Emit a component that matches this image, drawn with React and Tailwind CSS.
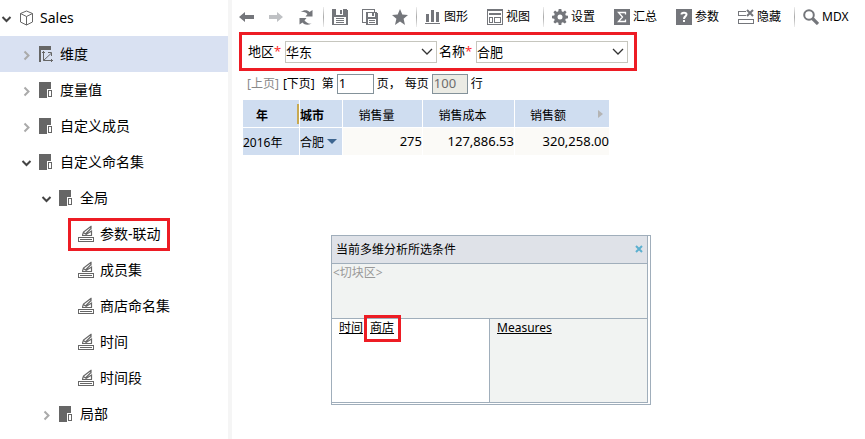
import React from "react";

function Svg({ children, className = "", box = "0 0 16 16" }) {
  return (
    <svg viewBox={box} className={"block h-4 w-4 shrink-0 " + className} fill="none" aria-hidden="true">
      {children}
    </svg>
  );
}

const BoxIcon = () => (
  <Svg>
    <path d="M7.5 1 1.5 3.500v8.500l6 3 6-3V3.500zM1.500 3.500l6 3 6-3M7.500 6.500V15" stroke="#666" />
  </Svg>
);

const DimensionIcon = () => (
  <Svg>
    <path d="M0 0h12v4H2v12H0z" fill="#666" shapeRendering="crispEdges" />
    <path d="M4.5 5v9.5H14M3 7l1.500-1.500L6 7M12.500 13v3M4.500 14.500l7.500-7M9 6.500h3.500V10" stroke="#666" />
  </Svg>
);

const LevelIcon = () => (
  <Svg>
    <g shapeRendering="crispEdges">
      <path d="M0 0h12v7H8v9H0z" fill="#666" />
      <path d="M9.500 8.500h3v6h-3z" stroke="#666" />
    </g>
  </Svg>
);

const SetIcon = () => (
  <Svg className="overflow-visible">
    <g transform="translate(-1 0)">
      <path d="M0.500 11.500h15v4h-15z" stroke="#666" shapeRendering="crispEdges" />
      <path d="M2 13h12v1H2z" fill="#666" shapeRendering="crispEdges" />
      <path d="M4 9h10v1H4z" fill="#666" shapeRendering="crispEdges" />
      <path d="m4.500 9 1-3 6-4.500L13.500 0M5.500 6.500 7.500 8l5.500-5.500M8 8.500 13.500 5v4.500M13 .5v3" stroke="#666" strokeWidth="1.200" />
    </g>
  </Svg>
);

const TREE = [
  { label: "Sales", level: 0, open: true, icon: BoxIcon },
  { label: "维度", level: 1, open: false, icon: DimensionIcon, selected: true },
  { label: "度量值", level: 1, open: false, icon: LevelIcon },
  { label: "自定义成员", level: 1, open: false, icon: LevelIcon },
  { label: "自定义命名集", level: 1, open: true, icon: LevelIcon },
  { label: "全局", level: 2, open: true, icon: LevelIcon },
  { label: "参数-联动", level: 3, icon: SetIcon, marked: true },
  { label: "成员集", level: 3, icon: SetIcon },
  { label: "商店命名集", level: 3, icon: SetIcon },
  { label: "时间", level: 3, icon: SetIcon },
  { label: "时间段", level: 3, icon: SetIcon },
  { label: "局部", level: 2, open: false, icon: LevelIcon },
];

const INDENT = ["pl-0", "pl-5", "pl-10", "pl-15"];

function TreeRow({ label, level, open, icon: Icon, selected, marked }) {
  return (
    <li className={"flex h-9 items-center " + INDENT[level] + (selected ? " bg-[#d9e1f2]" : "")}>
      <span className="flex w-[19px] shrink-0">
        {open !== undefined && (
          <button type="button" aria-label={label} aria-expanded={open} className="block pt-1">
            <Svg className="-ml-px">
              {open ? (
                <path d="m3.500 5 4 4 4-4" stroke="#444" strokeWidth="2" />
              ) : (
                <path d="m5.500 3.500 4 4-4 4" stroke="#aaa" strokeWidth="2" />
              )}
            </Svg>
          </button>
        )}
      </span>
      <a href="#" className="relative flex items-center gap-[5px] text-sm whitespace-nowrap text-black">
        <Icon />
        {label}
        {marked && (
          <span className="pointer-events-none absolute -top-1.5 -right-[9px] -bottom-[7px] -left-[11px] border-3 border-[#ed1c24]" />
        )}
      </a>
    </li>
  );
}

const G = "#74767b";

const icons = {
  back: <path d="M0 8 6 3v3h9v4H6v3z" fill={G} />,
  forward: <path d="M14 8 8 3v3H0v4h8v3z" fill="#bfc1c4" />,
  refresh: (
    <g fill={G}>
      <path d="M1.500 3C5 .5 8.500.5 10.500 3L13.500 1v6.500H6.500L8.500 5C6.500 3 4 2.500 1.500 3z" />
      <path d="M12.500 14.500C9 16.500 5.500 16 3.500 13.500L.5 15.500V9h7l-2 2.500c2 2.500 4.500 3.500 7 3z" />
    </g>
  ),
  save: (
    <g shapeRendering="crispEdges">
      <path d="M0 0h14l2 2v14H0z" fill={G} />
      <path d="M4 0h7v6H4zM2 8h12v7H2z" fill="#fff" />
      <path d="M8 1h2v4H8zM4 9h8v1H4zM4 11h8v1H4zM4 13h8v1H4z" fill={G} />
    </g>
  ),
  saveAs: (
    <g shapeRendering="crispEdges">
      <path d="M3.500 13.500h-3V.500h12v2" stroke={G} />
      <path d="M4 3h10l2 2v11H4z" fill={G} />
      <path d="M6 4h7v4H6zM6 10h8v5H6z" fill="#fff" />
      <path d="M10 4h2v3h-2zM7 11h6v1H7zM7 13h6v1H7z" fill={G} />
    </g>
  ),
  star: <path d="m8 0 2.300 5.500 5.700.500-4.400 3.800L13 16l-5-3.400L3 16l1.400-6.200L0 6l5.700-.5z" fill={G} />,
  chart: (
    <path d="M1 5h3v8H1zM6 1h3v12H6zM11 3h3v10h-3zM0 14h15v1H0z" fill={G} shapeRendering="crispEdges" />
  ),
  view: (
    <g shapeRendering="crispEdges">
      <path d="M.5 .5h15v15H.5z" stroke={G} />
      <path d="M1 1h14v1H1zM2 4h12v2H2z" fill={G} />
      <path d="M2.500 8.500h3v5h-3zM7.500 8.500h6v5h-6z" stroke={G} />
    </g>
  ),
  gear: (
    <g>
      <path
        d="M6.700 0h2.600l.4 2.300 1.300.6L13 1.500 14.600 3.200 13.200 5l.6 1.400 2.200.4v2.500l-2.200.4-.6 1.400 1.300 1.800-1.700 1.700-1.900-1.300-1.300.5L9.300 16H6.700l-.4-2.200-1.300-.5-1.900 1.300-1.700-1.700 1.300-1.800-.5-1.400L0 9.300V6.800l2.200-.4L2.800 5 1.400 3.200 3.100 1.500 5 2.900l1.300-.6z"
        fill={G}
      />
      <circle cx="8" cy="8" r="2.500" fill="#fff" />
    </g>
  ),
  sum: (
    <g>
      <path d="M0 0h16v16H0z" fill={G} />
      <path d="M11.500 5.500v-2h-7L8.500 8l-4 4.500h7v-2" stroke="#fff" strokeWidth="1.300" />
    </g>
  ),
  param: (
    <g>
      <path d="M0 0h16v16H0z" fill={G} />
      <path d="M5.500 5.500C5.500 3 10.500 3 10.500 5.500 10.500 7.500 8 7.300 8 10" stroke="#fff" strokeWidth="2" />
      <path d="M7 11h2v2H7z" fill="#fff" />
    </g>
  ),
  hide: (
    <g>
      <path d="M8 2.500H.5v4H8M.5 10.500h15v4H.5z" stroke={G} shapeRendering="crispEdges" />
      <path d="m9 1 6 6M15 1 9 7" stroke={G} strokeWidth="2" />
    </g>
  ),
  search: (
    <g stroke={G}>
      <circle cx="6" cy="6" r="4.800" strokeWidth="2" />
      <path d="m9.500 9.500 5.500 5.500" strokeWidth="3.200" />
    </g>
  ),
};

function Tool({ icon, text, name }) {
  return (
    <button type="button" aria-label={text || name} className="flex shrink-0 items-center gap-[3px] whitespace-nowrap">
      <Svg>{icons[icon]}</Svg>
      {text}
    </button>
  );
}

const Separator = ({ wide }) => (
  <span className={"mr-2 h-5 w-px shrink-0 bg-linear-to-b from-[#eee] via-[#aaa] to-[#eee] " + (wide ? "ml-[13px]" : "ml-2")} />
);

function Field({ id, label, value }) {
  return (
    <div className="flex items-center">
      <label htmlFor={id} className="w-[37px] whitespace-nowrap">
        {label}
        <span className="text-[#ff3030]">*</span>
      </label>
      <div className="relative">
        <select id={id} defaultValue={value} className="block h-[22px] w-[152px] appearance-none border border-[#c6c6be] bg-white leading-5 outline-none">
          <option>{value}</option>
        </select>
        <svg viewBox="0 0 12 8" className="pointer-events-none absolute top-[7px] right-1 h-2 w-3" fill="none" aria-hidden="true">
          <path d="m1 1 5 5 5-5" stroke="#333" strokeWidth="1.300" />
        </svg>
      </div>
    </div>
  );
}

const HEAD = "border-r border-b border-white bg-[#cfddf0] p-0 last:border-r-0";
const CELL = "border-r border-white bg-[#fbfaf7] p-0 text-right text-[13px] last:border-r-0";

export default function App() {
  return (
    <div className="relative flex min-h-screen bg-white font-['Noto_Sans','Noto_Sans_CJK_SC',sans-serif] text-xs text-black">
      <nav className="w-[232px] shrink-0 border-r-4 border-[#f5f5f5]">
        <ul>
          {TREE.map((row) => (
            <TreeRow key={row.label + row.level} {...row} />
          ))}
        </ul>
      </nav>

      <main className="min-w-0 flex-1">
        <div className="flex h-8 items-center overflow-hidden pt-0.5 pl-[7px]" role="toolbar">
          <div className="flex gap-3.5">
            <Tool icon="back" name="后退" />
            <Tool icon="forward" name="前进" />
            <Tool icon="refresh" name="刷新" />
          </div>
          <Separator />
          <div className="flex gap-3.5">
            <Tool icon="save" name="保存" />
            <Tool icon="saveAs" name="另存为" />
            <Tool icon="star" name="收藏" />
          </div>
          <Separator />
          <div className="flex gap-[19px]">
            <Tool icon="chart" text="图形" />
            <Tool icon="view" text="视图" />
          </div>
          <Separator wide />
          <div className="flex gap-[19px]">
            <Tool icon="gear" text="设置" />
            <Tool icon="sum" text="汇总" />
            <Tool icon="param" text="参数" />
            <Tool icon="hide" text="隐藏" />
          </div>
          <Separator wide />
          <Tool icon="search" text="MDX" />
        </div>

        <form className="ml-[7px] flex h-[39px] w-fit items-center gap-0.5 border-3 border-[#ed1c24] px-1.5 text-[13px]">
          <Field id="region" label="地区" value="华东" />
          <Field id="name" label="名称" value="合肥" />
        </form>

        <div className="mt-[3px] flex h-5 items-center pl-[15px] whitespace-nowrap">
          <button type="button" disabled className="text-[#888]">[上页]</button>
          <button type="button" className="ml-1">[下页]</button>
          <label htmlFor="page" className="ml-[7px]">第</label>
          <input id="page" defaultValue="1" className="mx-[3px] h-5 w-[37px] border border-[#84929a] px-px pb-0.5 text-[13px] leading-4 outline-none" />
          <span>页，</span>
          <label htmlFor="rows" className="ml-1">每页</label>
          <input id="rows" defaultValue="100" disabled className="mx-[3px] h-5 w-9 border border-[#84929a] bg-[#ebebe4] px-px pb-0.5 text-[13px] leading-4 text-[#6d6d6d]" />
          <span>行</span>
        </div>

        <table className="mt-1.5 ml-[11px] w-[366px] table-fixed border-separate border-spacing-0">
          <colgroup>
            <col className="w-[57px]" />
            <col className="w-[43px]" />
            <col className="w-20" />
            <col className="w-23" />
            <col className="w-[94px]" />
          </colgroup>
          <thead>
            <tr className="h-7">
              <th className={HEAD + " font-bold"}>
                <div className="flex h-5 items-center justify-center border-r-2 border-[#c8a951] pt-1 pr-4">年</div>
              </th>
              <th className={HEAD + " pt-1 text-left font-bold"}>城市</th>
              <th className={HEAD + " pt-1 pr-3 font-normal"}>销售量</th>
              <th className={HEAD + " pt-1 pr-3 font-normal"}>销售成本</th>
              <th className={HEAD + " font-normal"}>
                <div className="flex items-center justify-between pr-1.5 pl-[15px]">
                  <span className="pt-1">销售额</span>
                  <svg viewBox="0 0 5 8" className="h-2 w-[5px]" aria-hidden="true"><path d="m0 0 5 4-5 4z" fill="#b4b4b4" /></svg>
                </div>
              </th>
            </tr>
          </thead>
          <tbody>
            <tr className="h-[27px]">
              <td className="border-r border-white bg-[#cfddf0] p-0 pt-0.5">2016年</td>
              <td className="border-r border-white bg-[#cfddf0] p-0">
                <button type="button" className="flex items-center gap-[3px]">
                  <span className="pt-0.5">合肥</span>
                  <svg viewBox="0 0 10 5" className="h-[5px] w-2.5" aria-hidden="true"><path d="M0 0h10L5 5z" fill="#3d6590" /></svg>
                </button>
              </td>
              <td className={CELL}>275</td>
              <td className={CELL}>127,886.53</td>
              <td className={CELL}>320,258.00</td>
            </tr>
          </tbody>
        </table>
      </main>

      <section role="dialog" aria-labelledby="dialog-title" className="absolute top-[235px] left-[331px] w-80 border border-[#a0aebb] bg-white pr-0.5 pb-px">
        <div className="border-r border-b border-[#a0aebb] bg-[#f1f3f2]">
          <header className="flex h-7 items-center justify-between border-b border-[#a0aebb] bg-[#dfe2e8] px-1">
            <h2 id="dialog-title">当前多维分析所选条件</h2>
            <button type="button" aria-label="关闭" className="pb-0.5">
              <svg viewBox="0 0 8 8" className="block h-2 w-2" fill="none" aria-hidden="true"><path d="m1 1 6 6M7 1 1 7" stroke="#5cb0cf" strokeWidth="2" /></svg>
            </button>
          </header>
          <div className="h-[55px] border-b border-[#a0aebb] pt-px pl-px leading-4 text-[#999]">&lt;切块区&gt;</div>
          <div className="flex h-[83px] leading-4">
            <div className="flex flex-1 items-start gap-[7px] border-r border-[#a0aebb] bg-white pt-px pl-[7px]">
              <a href="#" className="underline">时间</a>
              <a href="#" className="relative underline">
                商店
                <span className="pointer-events-none absolute -top-[5px] -right-[7px] -bottom-1.5 -left-1.5 border-3 border-[#ed1c24]" />
              </a>
            </div>
            <div className="flex-1 pt-px pl-[7px]">
              <a href="#" className="underline">Measures</a>
            </div>
          </div>
        </div>
      </section>
    </div>
  );
}
